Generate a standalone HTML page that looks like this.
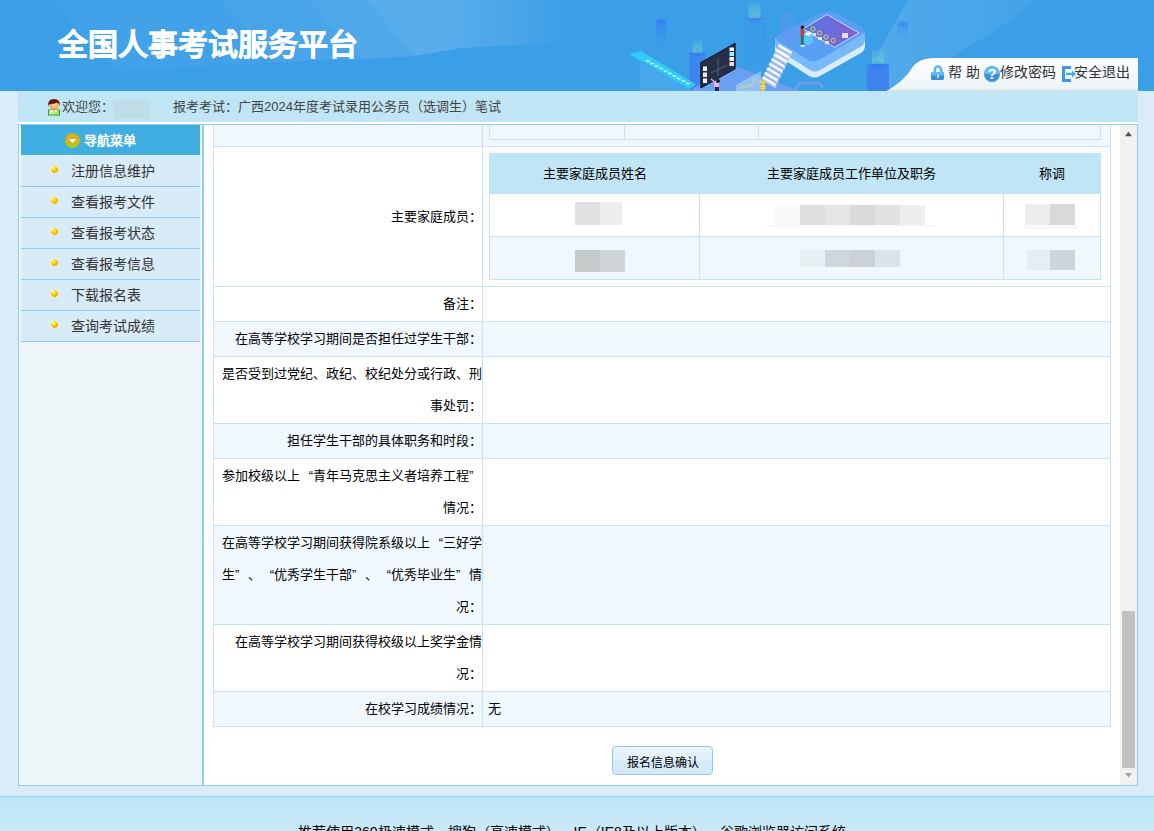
<!DOCTYPE html>
<html lang="zh-CN"><head><meta charset="utf-8">
<style>
*{margin:0;padding:0;box-sizing:border-box}
html,body{width:1154px;height:831px;overflow:hidden}
body{position:relative;text-spacing-trim:space-all;background:#daebf9;font-family:"Liberation Sans",sans-serif;color:#000;font-size:13px}
.abs{position:absolute}
#hdr{left:0;top:0;width:1154px;height:91px;background:#3b9fe8;overflow:hidden}
#title{left:58px;top:25px;font-size:30px;font-weight:bold;-webkit-text-stroke:0.5px #fff;color:#fff;line-height:40px;white-space:nowrap}
#tab{left:880px;top:58px;width:258px;height:33px}
.tl{top:62px;font-size:14px;color:#333;line-height:20px;white-space:nowrap}
#wel{left:18px;top:91px;width:1120px;height:31px;background:#c0e5f5}
#wline{left:18px;top:122px;width:1120px;height:2px;background:#fff}
.wt{top:98px;font-size:13px;color:#444;line-height:18px;white-space:nowrap}
#side{left:18px;top:124px;width:186px;height:662px;background:#eef6fa;border:1px solid #93cfe8;border-right:2px solid #93cfe8}
#shd{left:21px;top:125px;width:179px;height:30px;background:#40aee0}
.mi{left:21px;width:179px;height:31px;background:#d8ebf9;border-bottom:1px solid #8fcbe8}
.mt{position:absolute;left:50px;top:0;line-height:30px;font-size:14px;color:#333;white-space:nowrap}
.dot{position:absolute;left:30px;top:10px;width:7px;height:7px;background:#fff}.dot:after{content:"";position:absolute;left:0;top:0;width:7px;height:7px;border-radius:50%;background:radial-gradient(circle at 35% 30%,#ffff90 0,#ffcc00 40%,#e08a00 100%)}
#cont{left:204px;top:124px;width:934px;height:662px;background:#fff;border-top:1px solid #93cfe8;border-bottom:1px solid #93cfe8;border-right:1px solid #93cfe8;overflow:hidden}
#foot{left:0;top:796px;width:1154px;height:35px;background:linear-gradient(#bde5f5,#cae9f8);border-top:1px solid #9dd4ec}
.row{position:absolute;left:213px;width:898px;border-left:1px solid #c6e3f6;border-right:1px solid #c6e3f6;border-bottom:1px solid #c6e3f6}
.lab{position:absolute;left:0;top:0;width:268px;height:100%;border-right:1px solid #c6e3f6;text-align:right;line-height:32px;padding-top:1px;font-size:13px;white-space:nowrap}
.q{display:inline-block;width:13px}
.ql{text-align:left}.qr{text-align:right}
.lb{left:222px;width:260px;text-align:right;line-height:32px;font-size:13px;white-space:nowrap;color:#000}
.nh{top:153px;height:41px;line-height:41px;text-align:center;font-size:13px;color:#000;white-space:nowrap}
.btn{left:612px;top:746px;width:101px;height:29px;border:1px solid #8ccbea;border-radius:4px;background:linear-gradient(#eaf4fc 0,#e2f0fb 45%,#d3e8f7 55%,#d5e9f8 100%);font-size:12px;line-height:32px;text-align:center;color:#000}
</style></head><body>
<div id="hdr" class="abs">
<svg width="1154" height="91" viewBox="0 0 1154 91" style="position:absolute;left:0;top:0">
<defs>
<linearGradient id="tabg" x1="0" y1="0" x2="0" y2="1"><stop offset="0" stop-color="#fdfeff"/><stop offset=".6" stop-color="#f3f8fb"/><stop offset="1" stop-color="#eaf4fa"/></linearGradient>
<linearGradient id="beam" x1="0" y1="0" x2="0" y2="1"><stop offset="0" stop-color="#5fe0c8" stop-opacity="0"/><stop offset="1" stop-color="#5fe0c0" stop-opacity=".8"/></linearGradient>
<linearGradient id="pil" x1="0" y1="0" x2="0" y2="1"><stop offset="0" stop-color="#3f86ee"/><stop offset="1" stop-color="#3f8cee" stop-opacity="0"/></linearGradient>
<linearGradient id="scr" x1="0" y1="0" x2="1" y2="0"><stop offset="0" stop-color="#4f78e6"/><stop offset="1" stop-color="#8a5fd0"/></linearGradient>
</defs>
<linearGradient id="fr" gradientUnits="userSpaceOnUse" x1="0" y1="0" x2="570" y2="0"><stop offset="0" stop-color="#fff"/><stop offset=".78" stop-color="#fff"/><stop offset="1" stop-color="#fff" stop-opacity="0"/></linearGradient>
<polygon points="52,0 620,0 620,40 461,48 415,56 361,59 275,62 117,71" fill="url(#fr)" fill-opacity=".035"/>
<polygon points="222,0 620,0 620,40 461,48 415,56 361,59 275,62" fill="url(#fr)" fill-opacity=".035"/>
<polygon points="308,0 620,0 620,40 461,48 415,56 361,59" fill="url(#fr)" fill-opacity=".04"/>
<polygon points="367,0 620,0 620,40 461,48 415,56" fill="url(#fr)" fill-opacity=".06"/>
<linearGradient id="wv" gradientUnits="userSpaceOnUse" x1="880" y1="0" x2="1040" y2="0"><stop offset="0" stop-color="#fff" stop-opacity=".11"/><stop offset="1" stop-color="#fff" stop-opacity=".04"/></linearGradient>
<path d="M908,0 L1035,0 Q1000,30 968,47 Q935,65 905,91 L866,91 L880,49 Z" fill="url(#wv)"/>
<rect x="897" y="24" width="11" height="18" fill="url(#pil2)" opacity=".5"/>
<polygon points="897,24 902.5,21 908,24 902.5,26.5" fill="#3a86f2" opacity=".7"/>
<!-- pillars -->
<linearGradient id="pil2" x1="0" y1="0" x2="0" y2="1"><stop offset="0" stop-color="#3784f0" stop-opacity=".9"/><stop offset="1" stop-color="#3a8cee" stop-opacity="0"/></linearGradient>
<linearGradient id="beam2" x1="0" y1="0" x2="0" y2="1"><stop offset="0" stop-color="#8ee4c8" stop-opacity=".1"/><stop offset="1" stop-color="#80dcc0" stop-opacity=".5"/></linearGradient>
<rect x="656" y="21" width="10.5" height="27" fill="url(#pil2)"/>
<polygon points="656,21 661,19 666.5,21 661,24" fill="#2f7ef2"/>
<rect x="744" y="18" width="22" height="73" fill="url(#pil2)" opacity=".25"/>
<polygon points="744,18 755,14 766,18 755,23" fill="#3a88f0" opacity=".7"/>
<rect x="748.5" y="2" width="12" height="16" fill="url(#beam2)"/>
<rect x="689.5" y="53" width="16.5" height="38" fill="#3d86ee"/>
<polygon points="689.5,53 697.5,50 706,53 697.5,56" fill="#2f7ef2"/>
<rect x="692.5" y="41" width="10" height="12" fill="url(#beam2)"/>
<rect x="867" y="65" width="22" height="26" fill="#3d84ee"/>
<polygon points="867,65 878,61 889,65 878,69" fill="#2f7ef2"/>
<rect x="872" y="50" width="12" height="14" fill="url(#beam2)"/>
<!-- conveyor -->
<polygon points="640,62 690,89 690,91 640,91" fill="#56b4f2" fill-opacity=".45"/>
<polygon points="629.5,54.3 641,51 696,84.6 689.3,89" fill="#31cbf7"/>
<g stroke="#e8fbff" stroke-width="1.1" fill="none" opacity=".9">
<path d="M646,60 l2,1.5 l2,-1"/><path d="M650,62.5 l2,1.5 l2,-1"/><path d="M654.5,65 l2,1.5 l2,-1"/><path d="M659,67.5 l2,1.5 l2,-1"/><path d="M663.5,70 l2,1.5 l2,-1"/><path d="M668,72.5 l2,1.5 l2,-1"/><path d="M672.5,75 l2,1.5 l2,-1"/><path d="M677,77.5 l2,1.5 l2,-1"/><path d="M681.5,80 l2,1.5 l2,-1"/><path d="M686,82.5 l2,1.5 l2,-1"/>
</g>
<!-- lower platform -->
<polygon points="690,91 700,84 735,66 800,91" fill="#6aa0f3"/>
<!-- blackboard -->
<polygon points="700.8,62.6 735.1,43.3 735.1,68.8 700.8,88" fill="#262e48" stroke="#0f1424" stroke-width="1"/>
<rect x="703" y="66.5" width="4" height="4.5" fill="#e8f8ff"/><rect x="703" y="72.5" width="4" height="4.5" fill="#f8e8f0"/><rect x="703" y="78.5" width="4" height="4.5" fill="#eef8f0"/>
<rect x="729.5" y="47.5" width="4.5" height="3.5" fill="#f4f6fa"/><rect x="729.5" y="52" width="4.5" height="4" fill="#a8e8f8"/><rect x="729.5" y="57" width="4.5" height="4" fill="#f0f2f8"/><rect x="729.5" y="62" width="4.5" height="4" fill="#f8d8c8"/>
<path d="M718,58 v18 M711,73 l16,-8" stroke="#5a7080" stroke-width=".8"/>
<!-- person at board -->
<path d="M711,79 l5,4" stroke="#f3c0c8" stroke-width="1.2"/>
<rect x="714" y="82" width="5" height="5" fill="#f0b6cc"/>
<rect x="715" y="87" width="4" height="4" fill="#2a2660"/>
<circle cx="718" cy="81" r="2" fill="#1e2440"/>
<!-- chart panel -->
<polygon points="736,85 761,71 761,91 736,91" fill="#c8e6ff" fill-opacity=".45"/>
<path d="M739,89 l4,-3 l2,2 l4,-4 l2,2 l5,-8" stroke="#e6e060" stroke-width=".9" fill="none"/>
<!-- platform -->
<path d="M775,44 L775,52 Q776,55 780,57 L809,76 Q814,79 820,76 L861,53 Q865,50 865,46 L865,38 Z" fill="#d8ecfa"/>
<path d="M775,38 L775,45 Q775,49 780,51 L810,70 Q815,73 820,70 L860,47 Q865,44 865,40 L865,33 Z" fill="#78baf8"/>
<path d="M779,34 L823,12 Q828,10 834,12 L861,27 Q867,31 861,35 L819,60 Q814,63 808,60 L779,42 Q773,38 779,34 Z" fill="#5a9ff6"/>
<rect x="780.5" y="12" width="14.5" height="30" rx="7" fill="#7090f4" fill-opacity=".3"/>
<polygon points="803,29 827,14.5 859,33 834.5,47.3" fill="url(#scr)" stroke="#d6e2ff" stroke-width=".9"/>
<g fill="none" stroke="#ffd040" stroke-width=".9">
<circle cx="813" cy="29" r="2.1"/><circle cx="819.5" cy="33" r="2.1"/><circle cx="826" cy="37" r="2.1"/><circle cx="833" cy="40.5" r="2.1"/>
</g>
<g fill="#f4f6ff" fill-opacity=".85">
<rect x="812" y="33" width="4" height="3"/><rect x="818" y="37" width="4" height="3"/><rect x="825" y="41" width="4" height="3"/><rect x="842" y="33" width="6" height="5"/>
</g>
<polygon points="804,34 809,31 813,33.5 813,43 808,45.5 804,43" fill="#5cc4f6"/>
<polygon points="804,34 809,31 813,33.5 808,36" fill="#e8f2ff"/>
<rect x="800.5" y="29" width="3.6" height="7" fill="#c8403a"/><rect x="800.8" y="36" width="3" height="9" fill="#2a8060"/>
<rect x="800.5" y="45" width="4" height="1.6" fill="#f4f4f4"/>
<circle cx="802.5" cy="27.3" r="1.8" fill="#241010"/>
<!-- stairs -->
<polygon points="777.8,46.3 790.8,54.1 790.8,56.3 777.8,48.5" fill="#aebcec"/><polygon points="790.8,54.1 792.0,51.7 792.0,53.9 790.8,56.3" fill="#c4cde6"/><polygon points="777.8,46.3 790.8,54.1 792.0,51.7 779.0,43.9" fill="#f8fbff"/>
<polygon points="775.5,50.9 788.5,58.7 788.5,60.9 775.5,53.1" fill="#aebcec"/><polygon points="788.5,58.7 789.8,56.3 789.8,58.5 788.5,60.9" fill="#c4cde6"/><polygon points="775.5,50.9 788.5,58.7 789.8,56.3 776.8,48.5" fill="#f8fbff"/>
<polygon points="773.2,55.5 786.2,63.3 786.2,65.5 773.2,57.7" fill="#aebcec"/><polygon points="786.2,63.3 787.5,60.9 787.5,63.1 786.2,65.5" fill="#c4cde6"/><polygon points="773.2,55.5 786.2,63.3 787.5,60.9 774.5,53.1" fill="#f8fbff"/>
<polygon points="771.0,60.1 784.0,67.9 784.0,70.1 771.0,62.3" fill="#aebcec"/><polygon points="784.0,67.9 785.3,65.5 785.3,67.7 784.0,70.1" fill="#c4cde6"/><polygon points="771.0,60.1 784.0,67.9 785.3,65.5 772.3,57.7" fill="#f8fbff"/>
<polygon points="768.8,64.7 781.8,72.5 781.8,74.7 768.8,66.9" fill="#aebcec"/><polygon points="781.8,72.5 783.0,70.1 783.0,72.3 781.8,74.7" fill="#c4cde6"/><polygon points="768.8,64.7 781.8,72.5 783.0,70.1 770.0,62.3" fill="#f8fbff"/>
<polygon points="766.5,69.3 779.5,77.1 779.5,79.3 766.5,71.5" fill="#aebcec"/><polygon points="779.5,77.1 780.8,74.7 780.8,76.9 779.5,79.3" fill="#c4cde6"/><polygon points="766.5,69.3 779.5,77.1 780.8,74.7 767.8,66.9" fill="#f8fbff"/>
<polygon points="764.2,73.9 777.2,81.7 777.2,83.9 764.2,76.1" fill="#aebcec"/><polygon points="777.2,81.7 778.5,79.3 778.5,81.5 777.2,83.9" fill="#c4cde6"/><polygon points="764.2,73.9 777.2,81.7 778.5,79.3 765.5,71.5" fill="#f8fbff"/>
<polygon points="762.0,78.5 775.0,86.3 775.0,88.5 762.0,80.7" fill="#aebcec"/><polygon points="775.0,86.3 776.3,83.9 776.3,86.1 775.0,88.5" fill="#c4cde6"/><polygon points="762.0,78.5 775.0,86.3 776.3,83.9 763.3,76.1" fill="#f8fbff"/>
<!-- yuan -->
<path d="M760,80 l3,4 l3,-4 M763,84 v7 M760.5,86 h5 M760.5,88.5 h5" stroke="#ffdc20" stroke-width="1.8" fill="none"/>
<!-- clip -->
<path d="M796,91 Q796,83 804,83 L816,83 Q822,83 822,88" stroke="#8a9ee8" stroke-width="2.5" fill="none" stroke-opacity=".7"/>
<!-- tab -->
<path d="M887,91 Q905,80 912,68 Q918,58 935,58 L1138,58 L1138,91 Z" fill="url(#tabg)"/>
<!-- lock -->
<path d="M887,90.5 Q890,89 900,89 L1138,89 L1138,91 L887,91 Z" fill="#dfe6ea"/>
<path d="M934.8,72.5 v-2.8 a3.2,3.2 0 0 1 6.4,0 v2.8" stroke="#5cb6f4" stroke-width="2.6" fill="none"/>
<rect x="931" y="72" width="13" height="8" rx="1.6" fill="#3a8ed8"/>
<rect x="931" y="72" width="13" height="3.6" rx="1" fill="#5cb8f6"/>
<path d="M937.2,75 h1.6 l-.3,3 h-1 z" fill="#fff"/>
<!-- help -->
<circle cx="992" cy="74" r="8" fill="#3e93dc"/>
<path d="M984.2,74 a7.8,7.8 0 0 1 15.6,0 Z" fill="#6bbff4"/>
<!-- exit -->
<path d="M1071,67.5 h-7.5 v13 h7.5" stroke="#3a98e4" stroke-width="3" fill="none"/>
<path d="M1066,74 h7" stroke="#3ab0f0" stroke-width="2.4"/>
<path d="M1072,70.5 l4,3.5 l-4,3.5 z" fill="#3ab0f0"/>
</svg>
<div class="abs" style="left:984px;top:64px;width:16px;text-align:center;font:bold 14px/20px 'Liberation Sans',sans-serif;color:#fff">?</div>
</div>
<div id="title" class="abs">全国人事考试服务平台</div>

<div class="abs tl" style="left:948px">帮 助</div>
<div class="abs tl" style="left:1000px">修改密码</div>
<div class="abs tl" style="left:1074px">安全退出</div>
<div id="wel" class="abs"></div>
<div id="wline" class="abs"></div>
<svg class="abs" style="left:44px;top:96px" width="20" height="22" viewBox="0 0 20 22">
<defs><radialGradient id="face" cx=".5" cy=".45" r=".6"><stop offset="0" stop-color="#ffe0a0"/><stop offset="1" stop-color="#f09020"/></radialGradient>
<linearGradient id="body" x1="0" y1="0" x2="1" y2="0"><stop offset="0" stop-color="#d8f8b0"/><stop offset="1" stop-color="#90e840"/></linearGradient></defs>
<rect x="4.5" y="14" width="11" height="5" fill="url(#body)" stroke="#3a9a22" stroke-width="1"/>
<polygon points="6,14 9.5,14 8,16.5" fill="#fff"/><polygon points="10.5,14 14,14 12,16.5" fill="#fff"/>
<ellipse cx="10" cy="9.5" rx="4.3" ry="4.5" fill="url(#face)"/>
<path d="M4.2,10 Q3.5,3 10,3 Q16.5,3 15.8,10 Q15,7 13,6.5 Q9,8.5 6,8 Q5,9 4.2,10 Z" fill="#6e1410"/>
</svg>
<div class="abs wt" style="left:62px">欢迎您：</div>
<div class="abs" style="left:113px;top:100px;width:37px;height:19px;background:#bfdde9"></div>
<div class="abs" style="left:150px;top:100px;width:9px;height:19px;background:#c2e5f2"></div>
<div class="abs wt" style="left:173px">报考考试：广西2024年度考试录用公务员（选调生）笔试</div>

<div id="side" class="abs"></div>
<div id="shd" class="abs"></div>
<div class="abs" style="left:21px;top:155px;width:179px;height:1px;background:#e2f1fb"></div>
<svg class="abs" style="left:65px;top:133px" width="15" height="15" viewBox="0 0 15 15"><defs><linearGradient id="ic" x1="0" y1="0" x2="0" y2="1"><stop offset="0" stop-color="#e2a818"/><stop offset="1" stop-color="#b4c81a"/></linearGradient></defs><circle cx="7.5" cy="7.5" r="7.5" fill="url(#ic)"/><polygon points="3.8,6 11.2,6 7.5,10" fill="#fff"/></svg>
<div class="abs" style="left:84px;top:131px;font-size:13px;font-weight:bold;color:#fff;line-height:20px">导航菜单</div>
<div class="abs mi" style="top:156px"><span class="dot"></span><span class="mt">注册信息维护</span></div>
<div class="abs mi" style="top:187px"><span class="dot"></span><span class="mt">查看报考文件</span></div>
<div class="abs mi" style="top:218px"><span class="dot"></span><span class="mt">查看报考状态</span></div>
<div class="abs mi" style="top:249px"><span class="dot"></span><span class="mt">查看报考信息</span></div>
<div class="abs mi" style="top:280px"><span class="dot"></span><span class="mt">下载报名表</span></div>
<div class="abs mi" style="top:311px"><span class="dot"></span><span class="mt">查询考试成绩</span></div>
<div id="cont" class="abs"></div>
<div class="abs" style="left:213px;top:125px;width:898px;height:21px;background:#f0f8fe"></div>
<div class="abs" style="left:213px;top:146px;width:898px;height:1px;background:#c6e3f6"></div>
<div class="abs" style="left:213px;top:147px;width:898px;height:139px;background:#fff"></div>
<div class="abs" style="left:213px;top:286px;width:898px;height:1px;background:#c6e3f6"></div>
<div class="abs lb" style="top:201px">主要家庭成员：</div>
<div class="abs" style="left:213px;top:287px;width:898px;height:34px;background:#fff"></div>
<div class="abs" style="left:213px;top:321px;width:898px;height:1px;background:#c6e3f6"></div>
<div class="abs lb" style="top:288px">备注：</div>
<div class="abs" style="left:213px;top:322px;width:898px;height:34px;background:#f0f8fe"></div>
<div class="abs" style="left:213px;top:356px;width:898px;height:1px;background:#c6e3f6"></div>
<div class="abs lb" style="top:323px">在高等学校学习期间是否担任过学生干部：</div>
<div class="abs" style="left:213px;top:357px;width:898px;height:66px;background:#fff"></div>
<div class="abs" style="left:213px;top:423px;width:898px;height:1px;background:#c6e3f6"></div>
<div class="abs lb" style="top:358px">是否受到过党纪、政纪、校纪处分或行政、刑<br>事处罚：</div>
<div class="abs" style="left:213px;top:424px;width:898px;height:34px;background:#f0f8fe"></div>
<div class="abs" style="left:213px;top:458px;width:898px;height:1px;background:#c6e3f6"></div>
<div class="abs lb" style="top:425px">担任学生干部的具体职务和时段：</div>
<div class="abs" style="left:213px;top:459px;width:898px;height:66px;background:#fff"></div>
<div class="abs" style="left:213px;top:525px;width:898px;height:1px;background:#c6e3f6"></div>
<div class="abs lb" style="top:460px">参加校级以上<span class="q qr">“</span>青年马克思主义者培养工程<span class="q ql">”</span><br>情况：</div>
<div class="abs" style="left:213px;top:526px;width:898px;height:98px;background:#f0f8fe"></div>
<div class="abs" style="left:213px;top:624px;width:898px;height:1px;background:#c6e3f6"></div>
<div class="abs lb" style="top:527px">在高等学校学习期间获得院系级以上<span class="q qr">“</span>三好学<br>生<span class="q ql">”</span>、<span class="q qr">“</span>优秀学生干部<span class="q ql">”</span>、<span class="q qr">“</span>优秀毕业生<span class="q ql">”</span>情<br>况：</div>
<div class="abs" style="left:213px;top:625px;width:898px;height:66px;background:#fff"></div>
<div class="abs" style="left:213px;top:691px;width:898px;height:1px;background:#c6e3f6"></div>
<div class="abs lb" style="top:626px">在高等学校学习期间获得校级以上奖学金情<br>况：</div>
<div class="abs" style="left:213px;top:692px;width:898px;height:34px;background:#f0f8fe"></div>
<div class="abs" style="left:213px;top:726px;width:898px;height:1px;background:#c6e3f6"></div>
<div class="abs lb" style="top:693px">在校学习成绩情况：</div>
<div class="abs" style="left:213px;top:125px;width:1px;height:602px;background:#c6e3f6"></div>
<div class="abs" style="left:482px;top:125px;width:1px;height:602px;background:#c6e3f6"></div>
<div class="abs" style="left:1110px;top:125px;width:1px;height:602px;background:#c6e3f6"></div>
<div class="abs" style="left:489px;top:125px;width:612px;height:15px;border:1px solid #c6e3f6;border-top:0"></div>
<div class="abs" style="left:624px;top:125px;width:1px;height:14px;background:#c6e3f6"></div>
<div class="abs" style="left:758px;top:125px;width:1px;height:14px;background:#c6e3f6"></div>
<div class="abs" style="left:489px;top:153px;width:612px;height:41px;background:#c0e5f5"></div>
<div class="abs" style="left:489px;top:194px;width:612px;height:43px;background:#fff;border:1px solid #c6e3f6;border-top:0;border-bottom:1px solid #c6e3f6"></div>
<div class="abs" style="left:489px;top:237px;width:612px;height:43px;background:#f0f8fe;border:1px solid #c6e3f6;border-top:0"></div>
<div class="abs" style="left:699px;top:153px;width:1px;height:41px;background:#c6e2f5"></div>
<div class="abs" style="left:699px;top:194px;width:1px;height:85px;background:#c6e3f6"></div>
<div class="abs" style="left:1003px;top:153px;width:1px;height:41px;background:#c6e2f5"></div>
<div class="abs" style="left:1003px;top:194px;width:1px;height:85px;background:#c6e3f6"></div>
<div class="abs nh" style="left:490px;width:209px">主要家庭成员姓名</div>
<div class="abs nh" style="left:700px;width:303px">主要家庭成员工作单位及职务</div>
<div class="abs nh" style="left:1004px;width:96px">称调</div>
<div class="abs" style="left:575px;top:202px;width:25px;height:23px;background:#e0e0e0"></div>
<div class="abs" style="left:600px;top:202px;width:22px;height:23px;background:#eceded"></div>
<div class="abs" style="left:575px;top:250px;width:25px;height:22px;background:#c5cacb"></div>
<div class="abs" style="left:600px;top:250px;width:25px;height:22px;background:#d0d6d8"></div>
<div class="abs" style="left:775px;top:205px;width:25px;height:20px;background:#f9f9f9"></div>
<div class="abs" style="left:800px;top:205px;width:25px;height:20px;background:#dedede"></div>
<div class="abs" style="left:825px;top:205px;width:25px;height:20px;background:#e5e5e6"></div>
<div class="abs" style="left:850px;top:205px;width:25px;height:20px;background:#d9dbdb"></div>
<div class="abs" style="left:875px;top:205px;width:25px;height:20px;background:#e2e2e1"></div>
<div class="abs" style="left:900px;top:205px;width:25px;height:20px;background:#eeeeee"></div>
<div class="abs" style="left:767px;top:225px;width:170px;height:2px;background:#f5f9fc"></div>
<div class="abs" style="left:800px;top:250px;width:25px;height:17px;background:#e9f0f3"></div>
<div class="abs" style="left:825px;top:250px;width:25px;height:17px;background:#cfd6dc"></div>
<div class="abs" style="left:850px;top:250px;width:25px;height:17px;background:#ccd1d9"></div>
<div class="abs" style="left:875px;top:250px;width:25px;height:17px;background:#dce3ea"></div>
<div class="abs" style="left:1025px;top:204px;width:25px;height:21px;background:#ededed"></div>
<div class="abs" style="left:1050px;top:204px;width:25px;height:21px;background:#d9d9da"></div>
<div class="abs" style="left:1024px;top:225px;width:54px;height:4px;background:#f5f9fd"></div>
<div class="abs" style="left:1027px;top:250px;width:23px;height:20px;background:#e6edf4"></div>
<div class="abs" style="left:1050px;top:250px;width:25px;height:20px;background:#cfd5dc"></div>
<div class="abs" style="left:488px;top:693px;line-height:32px;font-size:13px">无</div>
<div class="abs btn">报名信息确认</div>
<div class="abs" style="left:1120px;top:125px;width:17px;height:660px;background:#f1f1f1"></div>
<div class="abs" style="left:1122px;top:611px;width:13px;height:157px;background:#c1c1c1"></div>
<svg class="abs" style="left:1120px;top:125px" width="17" height="17"><polygon points="5,11.3 12,11.3 8.5,6.8" fill="#505050"/></svg>
<svg class="abs" style="left:1120px;top:768px" width="17" height="17"><polygon points="5,5 12,5 8.5,9.5" fill="#a3a3a3"/></svg>
<div id="foot" class="abs"></div>
<div class="abs" style="left:-5px;top:820px;width:1154px;text-align:center;font-size:14px;line-height:24px;color:#000;white-space:nowrap">推荐使用360极速模式、搜狗（高速模式）、IE（IE8及以上版本）、谷歌浏览器访问系统</div>
</body></html>
